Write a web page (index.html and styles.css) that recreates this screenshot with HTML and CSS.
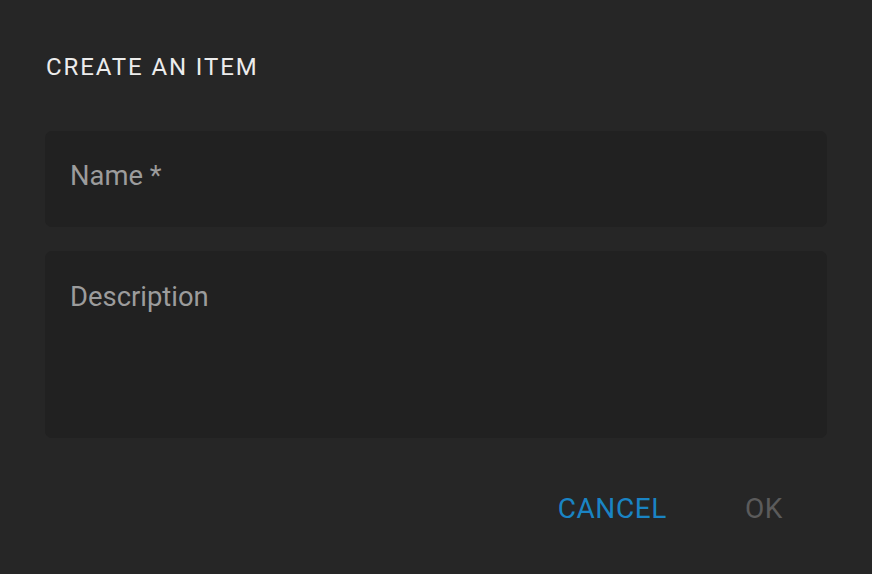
FILE: index.html
```html
<!DOCTYPE html>
<html>
    <head>
        <meta charset='utf-8'>
        <title>Create an item</title>
        <link rel="stylesheet" href="styles.css">
    </head>
    <body>
        <div class="dialog">
            <h2 class="title">Create an item</h2>
            <input class="field name" type="text" placeholder="Name *" spellcheck=false />
            <textarea class="field desc" placeholder="Description" spellcheck=false></textarea>
            <div class="actions">
                <button class="btn cancel">Cancel</button>
                <button class="btn ok" disabled>OK</button>
            </div>
        </div>
    </body>
</html>
```

FILE: styles.css
```css
html, body {
    margin: 0;
    height: 100%;
    background: #262626;
}
body {
    font-family: Roboto, "Liberation Sans", sans-serif;
}
.dialog {
    display: flex;
    flex-direction: column;
    padding: 51px 45px 0 45px;
}
.title {
    margin: 0 0 48px 1px;
    font-size: 24px;
    line-height: 32px;
    font-weight: 400;
    letter-spacing: 1.9px;
    text-transform: uppercase;
    color: #ececec;
}
.field {
    box-sizing: border-box;
    width: 100%;
    margin: 0;
    border: none;
    outline: none;
    border-radius: 7px;
    background: #212121;
    color: #e0e0e0;
    font: 400 27.4px/34px Roboto, "Liberation Sans", sans-serif;
    padding: 28px 23px 34px 25px;
}
.field::placeholder {
    color: #9c9c9c;
    opacity: 1;
}
.name {
    height: 96px;
}
.desc {
    height: 187px;
    margin-top: 24px;
    padding-top: 29px;
    resize: none;
}
.actions {
    display: flex;
    justify-content: flex-end;
    gap: 50px;
    margin-top: 54px;
    padding-right: 30px;
}
.btn {
    background: none;
    border: none;
    padding: 0 14px;
    font: 400 28px/34px Roboto, "Liberation Sans", sans-serif;
    letter-spacing: 0.6px;
    text-transform: uppercase;
    cursor: pointer;
}
.cancel {
    color: #1a84c4;
}
.ok {
    color: #5b5b5b;
}
```
